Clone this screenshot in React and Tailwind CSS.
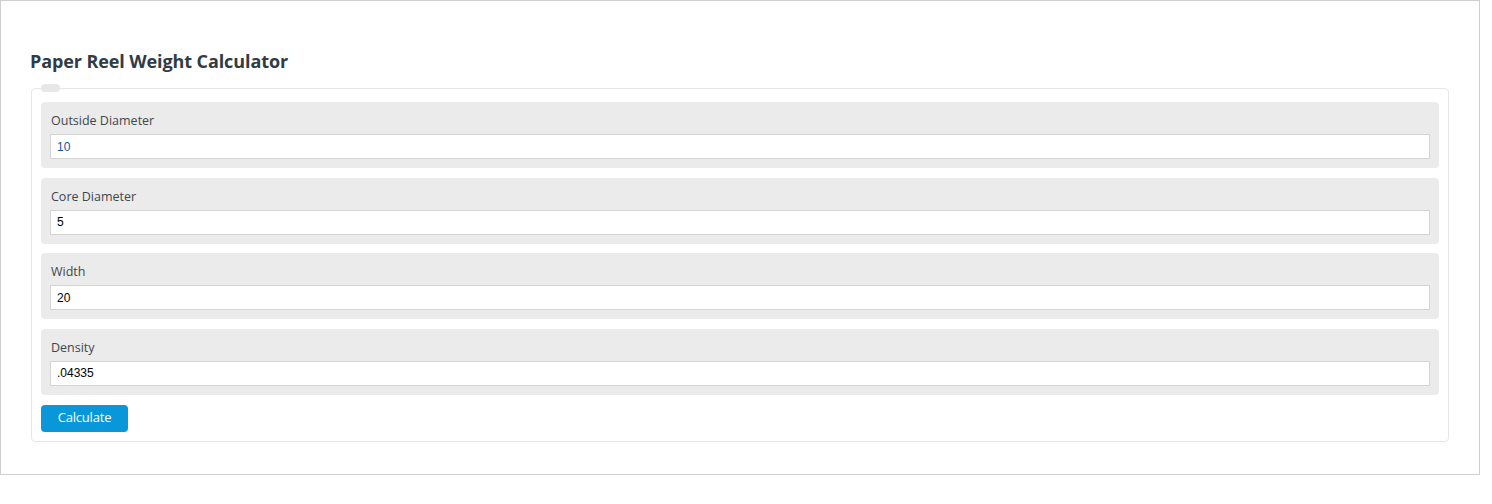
import React from 'react';

const fields = [
  { label: 'Outside Diameter', value: '10', color: 'text-[#0a5a9e]' },
  { label: 'Core Diameter', value: '5', color: 'text-black' },
  { label: 'Width', value: '20', color: 'text-black' },
  { label: 'Density', value: '.04335', color: 'text-black' },
];

const App = () => {
  return (
    <div className="w-[1492px] h-[504px] bg-white">
      <div className="w-[1480px] h-[475px] border border-[#cfcfcf] bg-white pt-[48px] box-border">
        <h1 className="pl-[29px] text-[18px] leading-[24px] font-bold text-[#303b44] font-['Open_Sans',sans-serif] tracking-[-0.1px]">
          Paper Reel Weight Calculator
        </h1>

        <div className="relative ml-[30px] mr-[30px] mt-[15px] border border-[#e6e6e6] rounded-[4px] pt-[13px] px-[9px] pb-[9px]">
          {/* legend pill */}
          <div className="absolute -top-[5px] left-[9px] w-[19px] h-[8px] rounded-full bg-[#e6e7e6]" />

          <div className="flex flex-col gap-[9.5px]">
            {fields.map((f) => (
              <div key={f.label} className="bg-[#eaebea] rounded-[4px] px-[9px] pt-[10px] pb-[9px]">
                <label className="block h-[18px] leading-[18px] mb-[4px] pl-[1px] text-[12.5px] text-[#3f474d] font-['Open_Sans',sans-serif]">
                  {f.label}
                </label>
                <input
                  readOnly
                  value={f.value}
                  className={`block w-full h-[25px] border border-[#d4d4d4] bg-white px-[6px] text-[12px] font-['Liberation_Sans',Arial,sans-serif] outline-none ${f.color}`}
                />
              </div>
            ))}
          </div>

          <button className="mt-[10px] w-[87px] h-[27px] rounded-[4px] bg-[#0898d9] text-white text-[13px] font-['Open_Sans',sans-serif] tracking-[-0.2px]">
            Calculate
          </button>
        </div>
      </div>
    </div>
  );
};

export default App;
